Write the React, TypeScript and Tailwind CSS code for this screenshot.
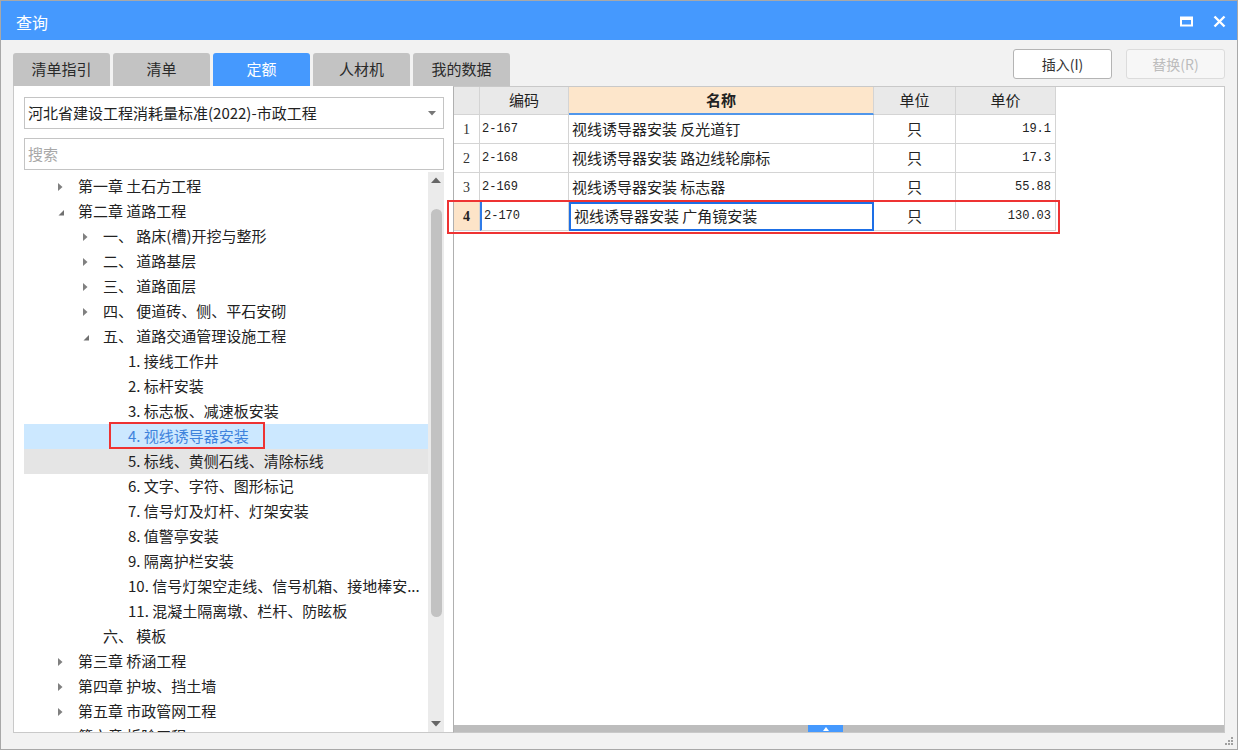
import React from 'react';

type Node = { label: string; level: number; arrow?: 'closed' | 'open'; state?: 'selected' | 'hover' };

const treeRows: Node[] = [
  { label: '第一章 土石方工程', level: 0, arrow: 'closed' },
  { label: '第二章 道路工程', level: 0, arrow: 'open' },
  { label: '一、 路床(槽)开挖与整形', level: 1, arrow: 'closed' },
  { label: '二、 道路基层', level: 1, arrow: 'closed' },
  { label: '三、 道路面层', level: 1, arrow: 'closed' },
  { label: '四、 便道砖、侧、平石安砌', level: 1, arrow: 'closed' },
  { label: '五、 道路交通管理设施工程', level: 1, arrow: 'open' },
  { label: '1. 接线工作井', level: 2 },
  { label: '2. 标杆安装', level: 2 },
  { label: '3. 标志板、减速板安装', level: 2 },
  { label: '4. 视线诱导器安装', level: 2, state: 'selected' },
  { label: '5. 标线、黄侧石线、清除标线', level: 2, state: 'hover' },
  { label: '6. 文字、字符、图形标记', level: 2 },
  { label: '7. 信号灯及灯杆、灯架安装', level: 2 },
  { label: '8. 值警亭安装', level: 2 },
  { label: '9. 隔离护栏安装', level: 2 },
  { label: '10. 信号灯架空走线、信号机箱、接地棒安...', level: 2 },
  { label: '11. 混凝土隔离墩、栏杆、防眩板', level: 2 },
  { label: '六、 模板', level: 1 },
  { label: '第三章 桥涵工程', level: 0, arrow: 'closed' },
  { label: '第四章 护坡、挡土墙', level: 0, arrow: 'closed' },
  { label: '第五章 市政管网工程', level: 0, arrow: 'closed' },
  { label: '第六章 拆除工程', level: 0, arrow: 'closed' },
];

const indents = ['pl-[33px]', 'pl-[58px]', 'pl-[83px]'];

const rows = [
  { no: '1', code: '2-167', name: '视线诱导器安装 反光道钉', unit: '只', price: '19.1' },
  { no: '2', code: '2-168', name: '视线诱导器安装 路边线轮廓标', unit: '只', price: '17.3' },
  { no: '3', code: '2-169', name: '视线诱导器安装 标志器', unit: '只', price: '55.88' },
  { no: '4', code: '2-170', name: '视线诱导器安装 广角镜安装', unit: '只', price: '130.03' },
];

const tabs = ['清单指引', '清单', '定额', '人材机', '我的数据'];

const cjk = "font-['Noto_Sans_CJK_SC','Noto_Sans',sans-serif]";
const mono = "font-['Liberation_Mono','Noto_Sans_CJK_SC',monospace]";

function Arrow({ kind }: { kind?: 'closed' | 'open' }) {
  if (!kind) return <span className="w-[21px] shrink-0" />;
  return (
    <span className="w-[21px] shrink-0 flex items-center">
      {kind === 'closed' ? (
        <svg width="8" height="10" viewBox="0 0 8 10">
          <path d="M1 1 L5.5 5 L1 9 Z" fill="#808080" />
        </svg>
      ) : (
        <svg width="8" height="10" viewBox="0 0 8 10">
          <path d="M7 3 L7 8.5 L1.5 8.5 Z" fill="#707070" />
        </svg>
      )}
    </span>
  );
}

export default function App() {
  return (
    <div className={`w-[1238px] h-[750px] flex flex-col border border-[#a8a8a8] bg-[#f2f2f2] overflow-hidden text-[#222] ${cjk}`}>
      {/* title bar */}
      <div className="h-[39px] shrink-0 bg-[#4599fe] flex items-center justify-between pl-[15px] pr-[11px]">
        <span className="text-white text-[16px] leading-none mt-[2px]">查询</span>
        <div className="flex items-center gap-[20px] mt-[2px]">
          <svg width="13" height="11" viewBox="0 0 13 11">
            <rect x="1" y="1.5" width="11" height="8" fill="none" stroke="white" strokeWidth="2" />
            <rect x="1" y="1" width="11" height="3" fill="white" />
          </svg>
          <svg width="13" height="13" viewBox="0 0 13 13">
            <path d="M1.5 1.5 L11.5 11.5 M11.5 1.5 L1.5 11.5" stroke="white" strokeWidth="2.4" />
          </svg>
        </div>
      </div>

      {/* tabs + buttons */}
      <div className="h-[46px] shrink-0 flex justify-between pl-[12px] pr-[12px]">
        <div className="flex items-end gap-[3px]">
          {tabs.map((t) => (
            <div
              key={t}
              className={`w-[97px] h-[33px] rounded-t-[3px] flex items-center justify-center text-[15px] ${
                t === '定额' ? 'bg-[#4599fe] text-white' : 'bg-[#c3c3c3] text-[#2a2a2a]'
              }`}
            >
              {t}
            </div>
          ))}
        </div>
        <div className="flex gap-[14px] pt-[9px]">
          <div className="w-[99px] h-[30px] bg-white border border-[#b4b4b4] rounded-[3px] flex items-center justify-center text-[14px] text-[#333]">
            插入(I)
          </div>
          <div className="w-[99px] h-[30px] bg-[#f7f7f7] border border-[#dcdcdc] rounded-[3px] flex items-center justify-center text-[14px] text-[#bcbcbc]">
            替换(R)
          </div>
        </div>
      </div>

      {/* panels */}
      <div className="h-[647px] shrink-0 flex pl-[12px] pr-[12px]">
        {/* left */}
        <div className="w-[440px] bg-white border-l border-b border-[#c9c9c9] pl-[10px] pr-[9px] flex flex-col">
          <div className="mt-[11px] h-[32px] border border-[#c4c4c4] flex items-center justify-between pl-[3px] pr-[7px] text-[15px] text-[#222]">
            <span>河北省建设工程消耗量标准(2022)-市政工程</span>
            <svg width="8" height="5" viewBox="0 0 8 5">
              <path d="M0 0 L8 0 L4 4.5 Z" fill="#777" />
            </svg>
          </div>
          <div className="mt-[9px] h-[32px] border border-[#c4c4c4] flex items-center pl-[3px] text-[15px] text-[#a8a8a8]">
            搜索
          </div>
          <div className="mt-[2px] flex-1 flex min-h-0">
            <div className="flex-1 pt-[2px] overflow-hidden relative">
              {treeRows.map((n, i) => (
                <div
                  key={i}
                  className={`h-[25px] flex items-center whitespace-nowrap text-[15px] ${indents[n.level]} ${
                    n.state === 'selected'
                      ? 'bg-[#cce8ff] text-[#3f83dc]'
                      : n.state === 'hover'
                      ? 'bg-[#e5e5e5]'
                      : ''
                  }`}
                >
                  {n.level < 2 ? <Arrow kind={n.arrow} /> : null}
                  <span className={n.level === 2 ? 'pl-[21px]' : ''}>{n.label}</span>
                </div>
              ))}
              {/* annotation box */}
              <div className="absolute left-[85px] top-[250px] w-[156px] h-[27px] border-2 border-[#ee3333]" />
            </div>
            <div className="w-[16px] bg-[#ebebeb] flex flex-col items-center py-[5px]">
              <svg width="10" height="6" viewBox="0 0 10 6">
                <path d="M0 6 L5 0.5 L10 6 Z" fill="#666" />
              </svg>
              <div className="mt-[26px] w-[11px] h-[408px] rounded-full bg-[#c2c2c2]" />
              <div className="flex-1" />
              <svg width="10" height="6" viewBox="0 0 10 6">
                <path d="M0 0 L10 0 L5 5.5 Z" fill="#666" />
              </svg>
            </div>
          </div>
        </div>

        {/* right */}
        <div className="flex-1 bg-white border border-[#c9c9c9] border-l-[#b0b0b0] flex flex-col">
          <div className="flex-1 relative">
            <div className={`grid grid-cols-[26px_89px_305px_82px_100px] w-[602px] text-[15px] ${cjk}`}>
              <div className="h-[28px] bg-[#e9e9e9] border-r border-b border-[#d4d4d4]" />
              <div className="h-[28px] bg-[#e9e9e9] border-r border-b border-[#d4d4d4] flex items-center justify-center">编码</div>
              <div className="h-[28px] bg-[#fde6cb] border-r border-b-2 border-r-[#d4d4d4] border-b-[#5096ea] flex items-center justify-center font-bold">名称</div>
              <div className="h-[28px] bg-[#e9e9e9] border-r border-b border-[#d4d4d4] flex items-center justify-center">单位</div>
              <div className="h-[28px] bg-[#e9e9e9] border-r border-b border-[#d4d4d4] flex items-center justify-center">单价</div>
              {rows.map((r) => {
                const active = r.no === '4';
                return (
                  <React.Fragment key={r.no}>
                    <div
                      className={`h-[29px] border-r border-b border-[#d4d4d4] flex items-center justify-center font-['Liberation_Serif',serif] text-[14px] ${
                        active ? 'bg-[#fde4c8] font-bold text-[#222]' : 'text-[#333]'
                      }`}
                    >
                      {r.no}
                    </div>
                    <div
                      className={`h-[29px] border-r border-b border-[#d4d4d4] flex items-center pl-[2px] text-[12px] ${mono} ${
                        active ? 'border-l-2 border-l-[#2f7be8] pl-[0px]' : ''
                      }`}
                    >
                      {r.code}
                    </div>
                    <div
                      className={`h-[29px] flex items-center pl-[3px] whitespace-nowrap ${
                        active ? 'border-2 border-[#1d6fe6] pl-[2px]' : 'border-r border-b border-[#d4d4d4]'
                      }`}
                    >
                      {r.name}
                    </div>
                    <div className="h-[29px] border-r border-b border-[#d4d4d4] flex items-center justify-center">{r.unit}</div>
                    <div className={`h-[29px] border-r border-b border-[#d4d4d4] flex items-center justify-end pr-[4px] text-[12px] ${mono}`}>
                      {r.price}
                    </div>
                  </React.Fragment>
                );
              })}
            </div>
            {/* annotation box */}
            <div className="absolute left-[-7px] top-[113px] w-[613px] h-[34px] border-2 border-[#ee3333]" />
          </div>
          <div className="h-[7px] bg-[#bdbdbd] flex">
            <div className="w-[35px] h-[7px] bg-[#4599fe] flex items-center justify-center ml-[354px]">
              <svg width="6" height="4" viewBox="0 0 6 4">
                <path d="M0 4 L3 0 L6 4 Z" fill="white" />
              </svg>
            </div>
          </div>
        </div>
      </div>

      {/* footer with grip */}
      <div className="flex-1 flex justify-end items-end pr-[3px] pb-[3px]">
        <svg width="10" height="10" viewBox="0 0 10 10">
          <rect x="7" y="1" width="2" height="2" fill="#a0a0a0" />
          <rect x="4" y="4" width="2" height="2" fill="#a0a0a0" />
          <rect x="7" y="4" width="2" height="2" fill="#a0a0a0" />
          <rect x="1" y="7" width="2" height="2" fill="#a0a0a0" />
          <rect x="4" y="7" width="2" height="2" fill="#a0a0a0" />
          <rect x="7" y="7" width="2" height="2" fill="#a0a0a0" />
        </svg>
      </div>
    </div>
  );
}
